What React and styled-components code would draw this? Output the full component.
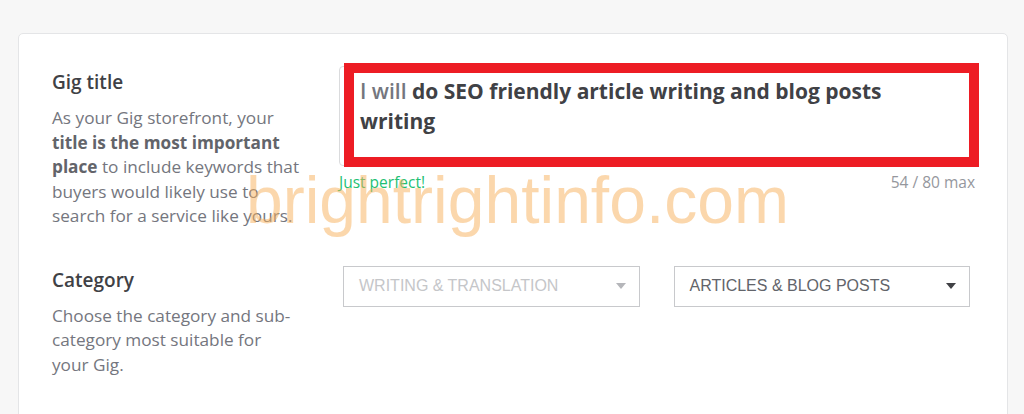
import React from "react";
import styled, { createGlobalStyle } from "styled-components";

const Global = createGlobalStyle`
  html, body { margin: 0; padding: 0; background: #f7f7f7; }
  body { font-family: "Open Sans", "Liberation Sans", sans-serif; }
  * { box-sizing: border-box; }
`;

const Page = styled.div`
  position: relative;
  width: 1024px;
  height: 414px;
  overflow: hidden;
  padding: 33px 16px 0 18px;
`;

const Card = styled.div`
  background: #fff;
  border: 1px solid #e4e5e7;
  border-radius: 5px;
  height: 420px;
  padding: 32px 32px 0 33px;
  display: flex;
  flex-direction: column;
  gap: 38px;
`;

const Row = styled.section`
  display: grid;
  grid-template-columns: 248px 1fr;
  column-gap: 39px;
`;

const Info = styled.div`
  padding-top: ${(p) => p.$top || 0}px;
`;

const Heading = styled.h3`
  margin: 0 0 11px;
  font-size: 19px;
  font-weight: 600;
  line-height: 26px;
  color: #404145;
`;

const Desc = styled.p`
  margin: 0;
  font-size: 17.2px;
  line-height: 24.5px;
  color: #74767e;
  b { font-weight: 700; color: #62646a; }
`;

const Field = styled.div`
  display: flex;
  flex-direction: column;
`;

const TextArea = styled.div`
  position: relative;
  height: 100px;
  border: 1px solid #dadbdd;
  border-radius: 4px;
  padding: 9px 40px 9px 20px;
  font-size: 21px;
  line-height: 30px;
  font-weight: 700;
  color: #404145;
`;

const Prefix = styled.span`
  color: #74767e;
  font-weight: 600;
`;

const Highlight = styled.div`
  position: absolute;
  left: 4px;
  top: -4px;
  right: -5px;
  bottom: -2px;
  border: 10px solid #ed1c24;
`;

const Meta = styled.div`
  display: flex;
  justify-content: space-between;
  margin-top: 6px;
  font-size: 15.5px;
  line-height: 20px;
`;

const Ok = styled.span`
  color: #1dbf73;
`;

const Count = styled.span`
  color: #95979d;
`;

const Selects = styled.div`
  display: grid;
  grid-template-columns: 1fr 1fr;
  column-gap: 34px;
  padding: 0 5px 0 4px;
  margin-top: -1px;
  align-self: start;
`;

const Select = styled.div`
  height: 41px;
  border: 1px solid #c8c9cc;
  display: flex;
  align-items: center;
  justify-content: space-between;
  padding: 0 13px 0 15px;
  font-family: "Liberation Sans", Arial, sans-serif;
  font-size: 16px;
  text-transform: uppercase;
  color: ${(p) => (p.$disabled ? "#c5c6c9" : "#62646a")};
`;

const Caret = styled.span`
  width: 0;
  height: 0;
  border-left: 5px solid transparent;
  border-right: 5px solid transparent;
  border-top: 6px solid ${(p) => (p.$disabled ? "#b5b6ba" : "#404145")};
`;

const Watermark = styled.div`
  position: absolute;
  left: 246px;
  top: 167px;
  font-family: "Liberation Sans", Arial, sans-serif;
  font-size: 66px;
  line-height: 1;
  color: rgba(248, 176, 90, 0.5);
  pointer-events: none;
  white-space: nowrap;
`;

export default function App() {
  return (
    <>
      <Global />
      <Page>
        <Card>
          <Row>
            <Info $top={3}>
              <Heading>Gig title</Heading>
              <Desc>
                As your Gig storefront, your <b>title is the most important place</b> to include
                keywords that buyers would likely use to search for a service like yours.
              </Desc>
            </Info>
            <Field>
              <TextArea>
                <Prefix>I will</Prefix> do SEO friendly article writing and blog posts writing
                <Highlight />
              </TextArea>
              <Meta>
                <Ok>Just perfect!</Ok>
                <Count>54 / 80 max</Count>
              </Meta>
            </Field>
          </Row>
          <Row>
            <Info>
              <Heading>Category</Heading>
              <Desc>Choose the category and sub-category most suitable for your Gig.</Desc>
            </Info>
            <Selects>
              <Select $disabled>
                Writing &amp; Translation
                <Caret $disabled />
              </Select>
              <Select>
                Articles &amp; Blog Posts
                <Caret />
              </Select>
            </Selects>
          </Row>
        </Card>
        <Watermark>brightrightinfo.com</Watermark>
      </Page>
    </>
  );
}
